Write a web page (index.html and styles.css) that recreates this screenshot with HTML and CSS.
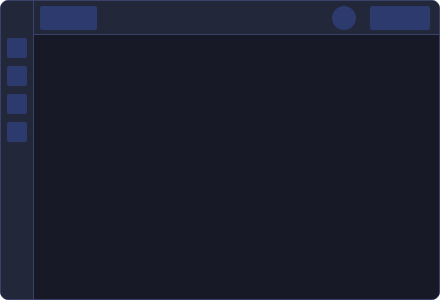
FILE: index.html
```html
<!DOCTYPE html>
<html>
<head>
<meta charset="utf-8">
<link rel="stylesheet" href="styles.css">
</head>
<body>
<div class="app">
  <aside class="sidebar">
    <div class="nav-item"></div>
    <div class="nav-item"></div>
    <div class="nav-item"></div>
    <div class="nav-item"></div>
  </aside>
  <div class="content">
    <header class="topbar">
      <div class="logo"></div>
      <div class="spacer"></div>
      <div class="avatar"></div>
      <div class="action"></div>
    </header>
    <main class="main"></main>
  </div>
</div>
</body>
</html>
```
FILE: styles.css
```css
html, body {
  margin: 0;
  padding: 0;
  background: #ffffff;
}
.app {
  box-sizing: border-box;
  width: 440px;
  height: 300px;
  border: 1px solid #3b4269;
  border-radius: 8px;
  overflow: hidden;
  display: flex;
  background: #171926;
}
.sidebar {
  width: 32px;
  flex: none;
  background: #222739;
  border-right: 1px solid #3b4269;
  display: flex;
  flex-direction: column;
  align-items: center;
  gap: 8px;
  padding-top: 37px;
}
.nav-item {
  width: 20px;
  height: 20px;
  border-radius: 2px;
  background: #2c3a6e;
}
.content {
  flex: 1;
  display: flex;
  flex-direction: column;
}
.topbar {
  flex: none;
  background: #222739;
  border-bottom: 1px solid #3b4269;
  display: flex;
  align-items: flex-start;
  padding: 5px 9px 0 6px;
  height: 28px;
}
.logo {
  width: 57px;
  height: 24px;
  border-radius: 2px;
  background: #2c3a6e;
}
.spacer { flex: 1; }
.avatar {
  width: 24px;
  height: 24px;
  border-radius: 50%;
  background: #2c3a6e;
  margin-right: 14px;
}
.action {
  width: 60px;
  height: 24px;
  border-radius: 2px;
  background: #2c3a6e;
}
.main {
  flex: 1;
  background: #171926;
}
```
